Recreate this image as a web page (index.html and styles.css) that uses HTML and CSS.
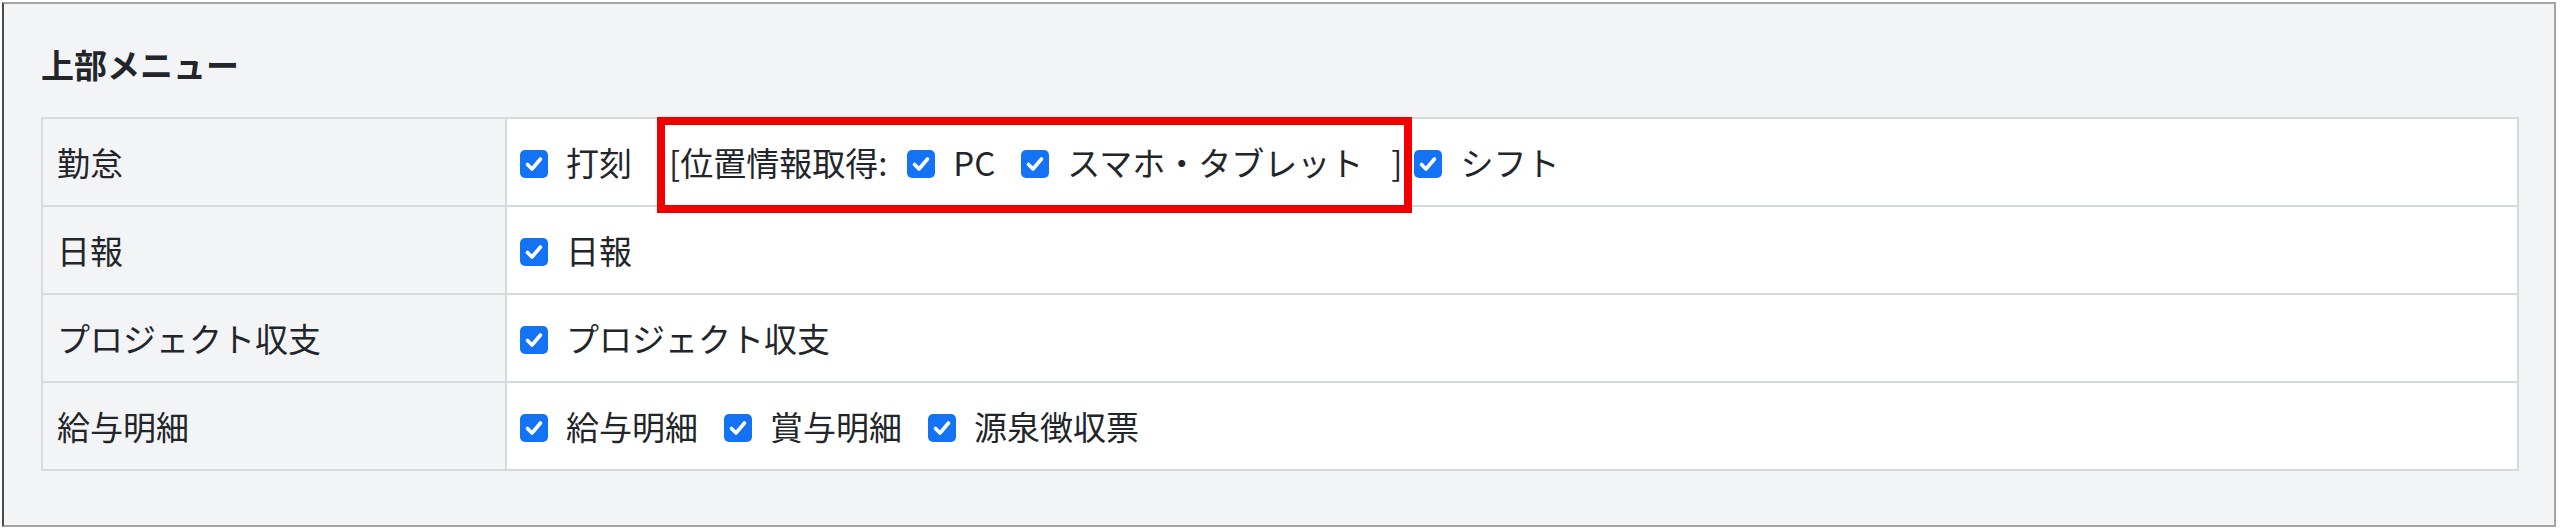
FILE: index.html
```html
<!DOCTYPE html>
<html lang="ja">
<head>
<meta charset="UTF-8">
<meta name="viewport" content="width=device-width, initial-scale=1.0">
<title>上部メニュー</title>
<link rel="stylesheet" href="styles.css">
</head>
<body>

<div class="frame">
    <h3 class="title">上部メニュー</h3>
    <table class="menu">
        <tr>
            <td class="name"><div class="cell">勤怠</div></td>
            <td class="opts">
                <div class="cell">
                    <label class="chk"><span class="box"><svg viewBox="0 0 28 28"><rect width="28" height="28" rx="5"/><path d="M7.5 14.5 L12 19 L20.5 9"/></svg></span>打刻</label>
                    <span class="geo">[位置情報取得:
                        <label class="chk first"><span class="box"><svg viewBox="0 0 28 28"><rect width="28" height="28" rx="5"/><path d="M7.5 14.5 L12 19 L20.5 9"/></svg></span>PC</label>
                        <label class="chk last"><span class="box"><svg viewBox="0 0 28 28"><rect width="28" height="28" rx="5"/><path d="M7.5 14.5 L12 19 L20.5 9"/></svg></span>スマホ・タブレット</label>]
                    </span>
                    <label class="chk"><span class="box"><svg viewBox="0 0 28 28"><rect width="28" height="28" rx="5"/><path d="M7.5 14.5 L12 19 L20.5 9"/></svg></span>シフト</label>
                </div>
            </td>
        </tr>
        <tr>
            <td class="name"><div class="cell">日報</div></td>
            <td class="opts">
                <div class="cell">
                    <label class="chk"><span class="box"><svg viewBox="0 0 28 28"><rect width="28" height="28" rx="5"/><path d="M7.5 14.5 L12 19 L20.5 9"/></svg></span>日報</label>
                </div>
            </td>
        </tr>
        <tr>
            <td class="name"><div class="cell">プロジェクト収支</div></td>
            <td class="opts">
                <div class="cell">
                    <label class="chk"><span class="box"><svg viewBox="0 0 28 28"><rect width="28" height="28" rx="5"/><path d="M7.5 14.5 L12 19 L20.5 9"/></svg></span>プロジェクト収支</label>
                </div>
            </td>
        </tr>
        <tr>
            <td class="name"><div class="cell">給与明細</div></td>
            <td class="opts">
                <div class="cell">
                    <label class="chk"><span class="box"><svg viewBox="0 0 28 28"><rect width="28" height="28" rx="5"/><path d="M7.5 14.5 L12 19 L20.5 9"/></svg></span>給与明細</label>
                    <label class="chk"><span class="box"><svg viewBox="0 0 28 28"><rect width="28" height="28" rx="5"/><path d="M7.5 14.5 L12 19 L20.5 9"/></svg></span>賞与明細</label>
                    <label class="chk"><span class="box"><svg viewBox="0 0 28 28"><rect width="28" height="28" rx="5"/><path d="M7.5 14.5 L12 19 L20.5 9"/></svg></span>源泉徴収票</label>
                </div>
            </td>
        </tr>
    </table>
</div>

</body>
</html>
```

FILE: styles.css
```css
body {
    margin: 0;
    font-family: "Noto Sans CJK JP", "Noto Sans", sans-serif;
    color: #222529;
    background-color: #ffffff;
}

.frame {
    margin: 2px 0 0 2px;
    width: 2554px;
    height: 525px;
    box-sizing: border-box;
    border: 2px solid #a4a4a4;
    border-left-color: #4a4a4a;
    background-color: #f3f4f6;
    padding: 40px 35px 0 37px;
}

.title {
    margin: 0 0 33px 0;
    font-size: 33px;
    line-height: 40px;
    font-weight: bold;
}

.menu {
    width: 2478px;
    table-layout: fixed;
    border-spacing: 0;
    border-top: 2px solid #d6dade;
    border-left: 2px solid #d6dade;
    font-size: 33px;
}

.menu td {
    padding: 0;
    box-sizing: border-box;
    border-right: 2px solid #d6dade;
    border-bottom: 2px solid #d6dade;
}

.name {
    width: 464px;
}

.name .cell {
    padding-left: 14px;
}

.opts {
    background-color: #ffffff;
}

.opts .cell {
    padding-left: 13px;
}

.cell {
    height: 86px;
    display: flex;
    align-items: center;
    white-space: nowrap;
}

.chk {
    display: inline-flex;
    align-items: center;
    gap: 18px;
    margin-right: 26px;
}

.box {
    display: block;
    width: 28px;
    height: 28px;
    margin-top: 4px;
}

.box svg {
    display: block;
    width: 28px;
    height: 28px;
}

.box rect {
    fill: #1473f5;
}

.box path {
    fill: none;
    stroke: #ffffff;
    stroke-width: 3.6;
    stroke-linecap: round;
    stroke-linejoin: round;
}

.geo {
    position: relative;
    display: inline-flex;
    align-items: center;
    margin-left: 11px;
    margin-right: 12px;
}

/* 赤枠の注記 */
.geo::after {
    content: "";
    position: absolute;
    left: -12px;
    right: -10px;
    top: calc(50% - 45px);
    height: 96px;
    box-sizing: border-box;
    border: 8px solid #f20000;
}

.geo .first {
    margin-left: 20px;
}

.geo .last {
    margin-right: 28px;
}
```
